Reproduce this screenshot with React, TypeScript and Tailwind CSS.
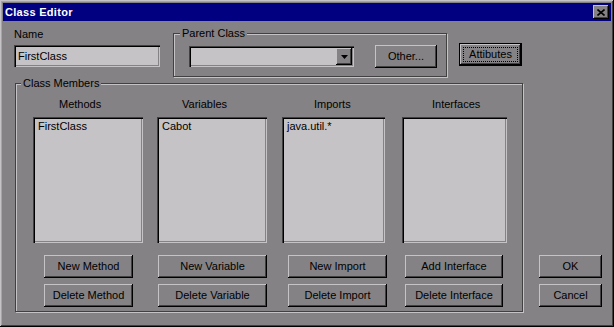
import React from "react";

const raised =
  "shadow-[inset_-1px_-1px_0_#000,inset_1px_1px_0_#c6c3c6,inset_-2px_-2px_0_#424142]";
const sunken =
  "shadow-[inset_1px_1px_0_#424142,inset_2px_2px_0_#000,inset_-1px_-1px_0_#c6c3c6,inset_-2px_-2px_0_#848284]";
const etched =
  "border border-[#424142] shadow-[inset_1px_1px_0_#c6c3c6,1px_1px_0_#c6c3c6]";

const Button: React.FC<{ label: string; className?: string }> = ({ label, className = "" }) => (
  <button
    type="button"
    className={`flex h-[23px] items-center justify-center bg-[#848284] text-black ${raised} ${className}`}
  >
    {label}
  </button>
);

const columns = [
  {
    title: "Methods",
    item: "FirstClass",
    box: "w-[110px]",
    labelPos: "ml-[26px]",
    list: "w-[110px]",
    btnPos: "ml-[11px] w-[89px]",
    actions: ["New Method", "Delete Method"],
  },
  {
    title: "Variables",
    item: "Cabot",
    box: "w-[110px] ml-[14px]",
    labelPos: "ml-[25px]",
    list: "w-[110px]",
    btnPos: "ml-[1px] w-[109px]",
    actions: ["New Variable", "Delete Variable"],
  },
  {
    title: "Imports",
    item: "java.util.*",
    box: "w-[105px] ml-[15px]",
    labelPos: "ml-[32px]",
    list: "w-[103px]",
    btnPos: "ml-[6px] w-[99px]",
    actions: ["New Import", "Delete Import"],
  },
  {
    title: "Interfaces",
    item: "",
    box: "w-[105px] ml-[15px]",
    labelPos: "ml-[30px]",
    list: "w-[105px]",
    btnPos: "ml-[3px] w-[98px]",
    actions: ["Add Interface", "Delete Interface"],
  },
];

export default function App() {
  return (
    <div className="h-[327px] w-[614px] bg-white">
      <div
        className={`flex h-[327px] w-[614px] flex-col bg-[#848284] p-[3px] text-[11px] leading-[13px] text-black shadow-[inset_-1px_-1px_0_#000,inset_1px_1px_0_#c6c3c6,inset_-2px_-2px_0_#424142,inset_2px_2px_0_#a5a5a5] [font-family:'Liberation_Sans',Arial,sans-serif]`}
      >
        {/* title bar */}
        <div className="flex h-[18px] items-center justify-between bg-[#000080] pl-[2px] pr-[2px]">
          <span className="text-[11px] font-bold tracking-[0.3px] text-white">Class Editor</span>
          <div className={`flex h-[14px] w-[16px] items-center justify-center bg-[#848284] ${raised}`}>
            <svg width="8" height="7" viewBox="0 0 8 7">
              <path d="M0.5 0.5 L7.5 6.5 M7.5 0.5 L0.5 6.5" stroke="#000" strokeWidth="1.6" />
            </svg>
          </div>
        </div>

        {/* top row */}
        <div className="flex items-start pl-[11px] pt-[7px]">
          <div className="flex flex-col">
            <span>Name</span>
            <div className={`mt-[4px] flex h-[22px] w-[146px] items-center bg-[#c6c3c6] pl-[4px] ${sunken}`}>
              FirstClass
            </div>
          </div>

          <fieldset className={`ml-[13px] mt-[-1px] w-[274px] ${etched}`}>
            <legend className="ml-[6px] bg-[#848284] px-[2px]">Parent Class</legend>
            <div className="flex items-center pb-[8px] pl-[15px] pt-[5px]">
              <div className={`flex h-[21px] w-[165px] items-center justify-end bg-[#c6c3c6] p-[2px] ${sunken}`}>
                <div className={`flex h-[17px] w-[16px] items-center justify-center bg-[#848284] ${raised}`}>
                  <svg width="7" height="4" viewBox="0 0 7 4">
                    <path d="M0 0 H7 L3.5 4 Z" fill="#000" />
                  </svg>
                </div>
              </div>
              <Button label="Other..." className="ml-[21px] h-[21px] w-[62px]" />
            </div>
          </fieldset>

          <button
            type="button"
            className={`ml-[12px] mt-[15px] flex h-[23px] w-[63px] border border-black bg-[#848284] p-[3px] ${raised}`}
          >
            <span className="flex flex-1 items-center justify-center border border-dotted border-black">
              Attibutes
            </span>
          </button>
        </div>

        {/* members */}
        <div className="flex pl-[12px]">
          <fieldset className={`w-[508px] ${etched}`}>
            <legend className="ml-[5px] bg-[#848284] px-[2px]">Class Members</legend>
            <div className="flex pb-[4px] pl-[17px]">
              {columns.map((col) => (
                <div key={col.title} className={`flex flex-col ${col.box}`}>
                  <span className={`mt-[8px] ${col.labelPos}`}>{col.title}</span>
                  <div className={`mt-[6px] h-[126px] bg-[#c6c3c6] pl-[5px] pt-[3px] ${sunken} ${col.list}`}>
                    {col.item}
                  </div>
                  <Button label={col.actions[0]} className={`mt-[12px] h-[22px] ${col.btnPos}`} />
                  <Button label={col.actions[1]} className={`mt-[6px] ${col.btnPos}`} />
                </div>
              ))}
            </div>
          </fieldset>

          <div className="mb-[5px] ml-[16px] flex flex-col self-end">
            <Button label="OK" className="h-[22px] w-[63px]" />
            <Button label="Cancel" className="mt-[6px] w-[63px]" />
          </div>
        </div>
      </div>
    </div>
  );
}
